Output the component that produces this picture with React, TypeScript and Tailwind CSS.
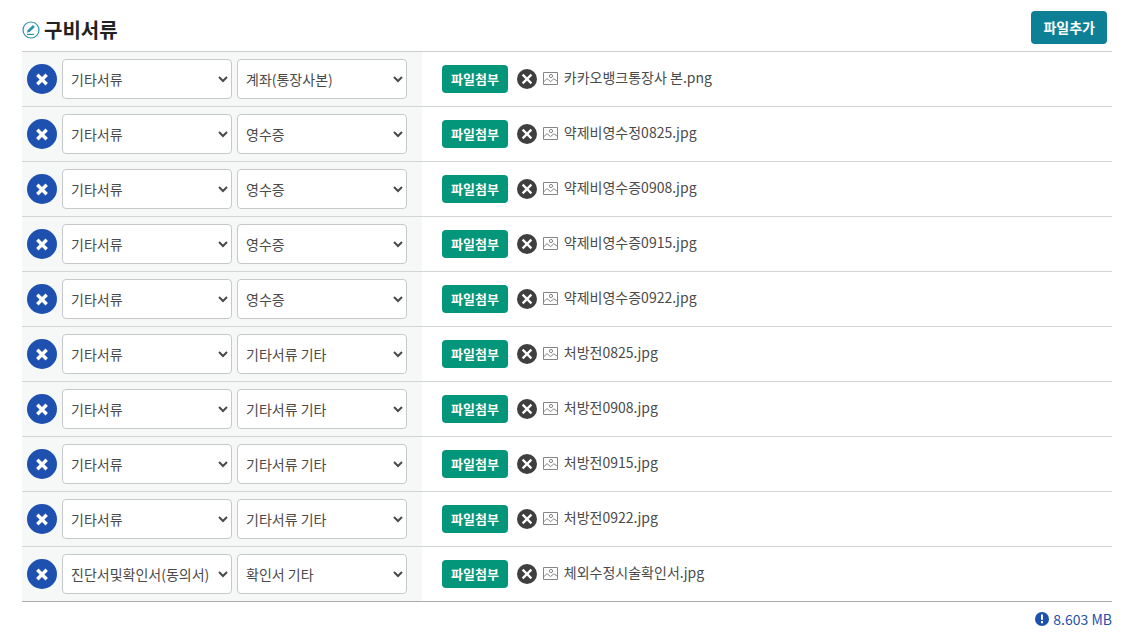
import React, { useState } from "react";

interface DocumentRow {
  id: number;
  category: string;
  kind: string;
  fileName: string;
}

const categories = ["기타서류", "진단서및확인서(동의서)"];
const kinds = ["계좌(통장사본)", "영수증", "기타서류 기타", "확인서 기타"];

const initialRows: DocumentRow[] = [
  { id: 1, category: "기타서류", kind: "계좌(통장사본)", fileName: "카카오뱅크통장사 본.png" },
  { id: 2, category: "기타서류", kind: "영수증", fileName: "약제비영수정0825.jpg" },
  { id: 3, category: "기타서류", kind: "영수증", fileName: "약제비영수증0908.jpg" },
  { id: 4, category: "기타서류", kind: "영수증", fileName: "약제비영수증0915.jpg" },
  { id: 5, category: "기타서류", kind: "영수증", fileName: "약제비영수증0922.jpg" },
  { id: 6, category: "기타서류", kind: "기타서류 기타", fileName: "처방전0825.jpg" },
  { id: 7, category: "기타서류", kind: "기타서류 기타", fileName: "처방전0908.jpg" },
  { id: 8, category: "기타서류", kind: "기타서류 기타", fileName: "처방전0915.jpg" },
  { id: 9, category: "기타서류", kind: "기타서류 기타", fileName: "처방전0922.jpg" },
  { id: 10, category: "진단서및확인서(동의서)", kind: "확인서 기타", fileName: "체외수정시술확인서.jpg" },
];

const PencilIcon = () => (
  <svg width="18" height="18" viewBox="0 0 18 18" fill="none" aria-hidden="true">
    <circle cx="9" cy="9" r="8" stroke="#2b94ab" strokeWidth="1.2" />
    <path d="M5 11.6 5.6 9.2 10.9 3.9 12.9 5.9 7.6 11.1z" fill="#2b94ab" />
    <path d="M5 13.4h7" stroke="#2b94ab" strokeWidth="1.2" />
  </svg>
);

const RemoveRowIcon = () => (
  <svg width="30" height="30" viewBox="0 0 30 30" fill="none" aria-hidden="true">
    <circle cx="15" cy="15" r="15" fill="#1d50af" />
    <path d="m10.300 10.800 9.400 9.400m0-9.400-9.400 9.400" stroke="#fff" strokeWidth="3.4" />
  </svg>
);

const RemoveFileIcon = () => (
  <svg width="20" height="20" viewBox="0 0 20 20" fill="none" aria-hidden="true">
    <circle cx="10" cy="10" r="10" fill="#3f3f3f" />
    <path d="m5.6 5.6 8.8 8.8m0-8.8-8.8 8.8" stroke="#fff" strokeWidth="2.2" />
  </svg>
);

const ImageIcon = () => (
  <svg width="15" height="13" viewBox="0 0 15 13" fill="none" stroke="#858585" aria-hidden="true">
    <path d="M.5.5h14v12H.5z" />
    <circle cx="8" cy="4" r="1.6" />
    <path d="m1 9.5 3-2.900 3.600 3 3.200-2.800L14 9" />
  </svg>
);

const AlertIcon = () => (
  <svg width="14" height="14" viewBox="0 0 14 14" aria-hidden="true">
    <circle cx="7" cy="7" r="7" fill="#1d50af" />
    <path d="M6 2.500h2v5.200H6zM6 9h2v2.200H6z" fill="#fff" />
  </svg>
);

interface SelectProps {
  label: string;
  value: string;
  options: string[];
  onChange: (value: string) => void;
}

const Select: React.FunctionComponent<SelectProps> = ({
  label,
  value,
  options,
  onChange,
}) => (
  <select
    aria-label={label}
    value={value}
    onChange={(e) => onChange(e.target.value)}
    className="min-w-0 flex-1 h-10 px-1 pb-px text-sm text-[#4a4a4a] bg-white border border-[#c6c9cc] rounded"
  >
    {options.map((option) => (
      <option key={option}>{option}</option>
    ))}
  </select>
);

const App: React.FunctionComponent = () => {
  const [rows, setRows] = useState<DocumentRow[]>(initialRows);

  const updateRow = (id: number, changes: Partial<DocumentRow>) => {
    setRows(rows.map((row) => (row.id === id ? { ...row, ...changes } : row)));
  };

  const addRow = () => {
    const id = Math.max(0, ...rows.map((row) => row.id)) + 1;
    setRows([...rows, { id, category: categories[0], kind: kinds[0], fileName: "" }]);
  };

  return (
    <main className="bg-white pl-[22px] pr-[14px] font-['Noto_Sans_CJK_KR',sans-serif]">
      <header className="flex items-center justify-between pt-[11px] pb-[7px] pr-[5px]">
        <h1 className="flex items-center gap-1 pt-1 text-xl leading-7 font-bold text-[#222]">
          <PencilIcon />
          구비서류
        </h1>
        <button
          onClick={addRow}
          className="h-[33px] px-3 pb-0.5 rounded bg-[#0d8096] text-white text-sm font-bold"
        >
          파일추가
        </button>
      </header>

      <table className="w-full border-separate border-spacing-0 border-t border-[#ccc]">
        <tbody>
          {rows.map((row) => (
            <tr key={row.id} className="group">
              <td className="w-[400px] h-[55px] pl-[5px] pr-[15px] bg-[#f6f7f7] border-b border-[#d2d4d6] group-last:border-[#aaa]">
                <div className="flex items-center gap-[5px]">
                  <button
                    aria-label="서류 삭제"
                    onClick={() => setRows(rows.filter((r) => r.id !== row.id))}
                    className="shrink-0"
                  >
                    <RemoveRowIcon />
                  </button>
                  <Select
                    label="서류 분류"
                    value={row.category}
                    options={categories}
                    onChange={(category) => updateRow(row.id, { category })}
                  />
                  <Select
                    label="서류 종류"
                    value={row.kind}
                    options={kinds}
                    onChange={(kind) => updateRow(row.id, { kind })}
                  />
                </div>
              </td>
              <td className="pl-5 border-b border-[#d2d4d6] group-last:border-[#aaa]">
                <div className="flex items-center">
                  <button className="h-7 px-[9px] rounded bg-[#04967a] text-white text-[13px] font-bold">
                    파일첨부
                  </button>
                  {row.fileName && (
                    <>
                      <button
                        aria-label="파일 삭제"
                        onClick={() => updateRow(row.id, { fileName: "" })}
                        className="ml-[9px] mr-1.5"
                      >
                        <RemoveFileIcon />
                      </button>
                      <span className="flex items-center gap-1.5 pb-0.5 text-sm text-[#4a4a4a]">
                        <ImageIcon />
                        <span className="pb-0.5">{row.fileName}</span>
                      </span>
                    </>
                  )}
                </div>
              </td>
            </tr>
          ))}
        </tbody>
      </table>

      <p className="flex items-center justify-end gap-1 pt-[7px] text-sm text-[#1d50af]">
        <AlertIcon />
        8.603 MB
      </p>
    </main>
  );
};

export default App;
